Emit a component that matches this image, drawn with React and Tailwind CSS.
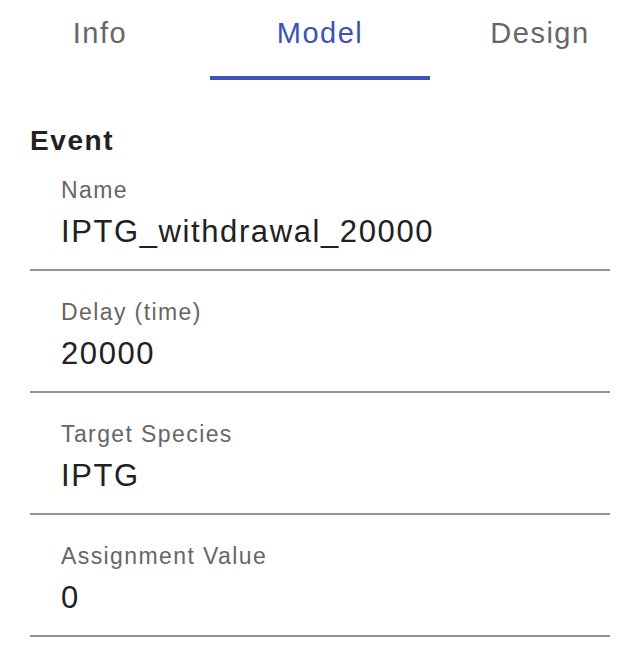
import React, { useState } from "react";

const tabs = ["Info", "Model", "Design"];

const fields = [
  { label: "Name", value: "IPTG_withdrawal_20000" },
  { label: "Delay (time)", value: "20000" },
  { label: "Target Species", value: "IPTG" },
  { label: "Assignment Value", value: "0" },
];

const App = () => {
  const [active, setActive] = useState(1);

  return (
    <div
      className="w-[644px] h-[666px] overflow-hidden bg-white"
      style={{ fontFamily: '"Liberation Sans", Arial, sans-serif' }}
    >
      {/* Tabs */}
      <div className="flex -ml-[10px] w-[660px] h-[80px]">
        {tabs.map((t, i) => (
          <button
            key={t}
            onClick={() => setActive(i)}
            className={`relative w-[220px] h-[80px] pt-[17px] flex justify-center items-start text-[29px] leading-[32px] tracking-[1.5px] ${
              i === active ? "text-[#3f51b5]" : "text-[#666666]"
            }`}
          >
            {t}
            {i === active && (
              <span className="absolute left-0 right-0 bottom-0 h-[4px] bg-[#3f51b5]" />
            )}
          </button>
        ))}
      </div>

      <div className="pl-[30px] pr-[34px] pt-[45px]">
        {/* Section title */}
        <h2 className="text-[28px] leading-[32px] font-bold tracking-[1.6px] text-[#212121]">
          Event
        </h2>

        {fields.map((f, i) => (
          <div
            key={f.label}
            className={`pl-[31px] pb-[19px] border-b-2 border-[#949494] ${
              i === 0 ? "pt-[20px]" : "pt-[28px]"
            }`}
          >
            <div className="text-[23px] leading-[26px] tracking-[1.4px] text-[#666666]">
              {f.label}
            </div>
            <div className="mt-[11px] text-[31px] leading-[36px] tracking-[1.6px] text-[#212121]">
              {f.value}
            </div>
          </div>
        ))}
      </div>
    </div>
  );
};

export default App;
